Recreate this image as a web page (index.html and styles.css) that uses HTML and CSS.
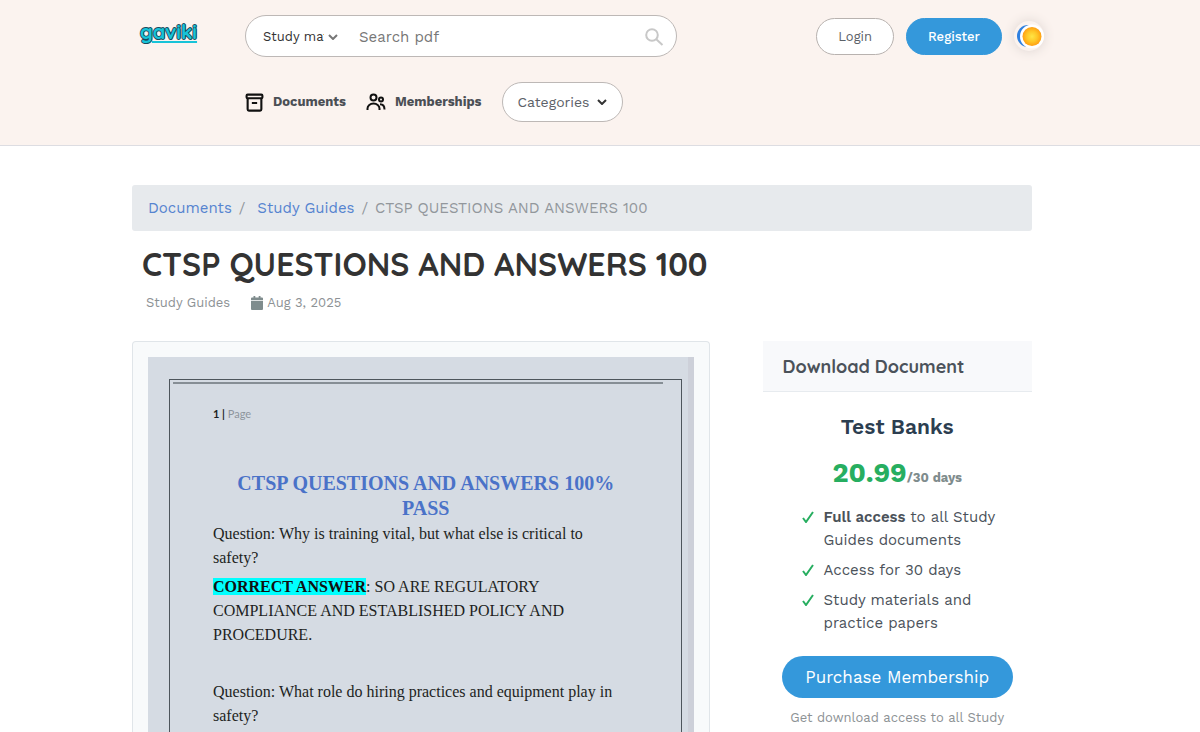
FILE: index.html
```html
<!DOCTYPE html>
<html lang="en">
<head>
<meta charset="utf-8">
<meta name="viewport" content="width=device-width, initial-scale=1">
<title>CTSP QUESTIONS AND ANSWERS 100</title>
<link rel="stylesheet" href="styles.css">
</head>
<body>
<header class="header">
  <a class="logo" href="#">gaviki</a>
  <form class="search" role="search">
    <div class="picker">
      <select class="picker-select" aria-label="Category"><option>Study materials</option></select>
      <svg class="picker-arrow" viewBox="0 0 10 6" aria-hidden="true"><path d="M1 1l4 4 4-4"/></svg>
    </div>
    <input class="search-input" type="text" placeholder="Search pdf" aria-label="Search pdf">
    <button class="search-button" type="submit" aria-label="Search">
      <svg viewBox="0 0 20 20" aria-hidden="true"><circle cx="8" cy="8" r="5.800"/><path d="M12 12l6.500 6"/></svg>
    </button>
  </form>
  <div class="account">
    <a class="pill" href="#">Login</a>
    <a class="pill pill-blue" href="#">Register</a>
    <button class="theme" type="button" aria-label="Toggle theme">
      <svg viewBox="0 0 30 30" aria-hidden="true">
        <defs><radialGradient id="sun"><stop offset="0" stop-color="#ffe545"/><stop offset=".55" stop-color="#ffc727"/><stop offset="1" stop-color="#ff9f12"/></radialGradient></defs>
        <circle cx="14" cy="15" r="11" fill="#2f80e0"/><circle cx="18" cy="15.500" r="12" fill="#fff"/><circle cx="18" cy="15.500" r="9.500" fill="url(#sun)"/>
      </svg>
    </button>
  </div>
  <nav class="nav">
    <a class="nav-link" href="#">
      <svg viewBox="0 0 18 18" aria-hidden="true"><rect x="1.500" y="1.500" width="15" height="3.500" rx="1"/><path d="M2.500 5v10.500a1.200 1.200 0 0 0 1.200 1.200h10.600a1.200 1.200 0 0 0 1.200-1.200V5M6.500 9.500h5"/></svg>
      Documents</a>
    <a class="nav-link" href="#">
      <svg class="people" viewBox="0 0 20 18" aria-hidden="true"><circle cx="7.500" cy="4.500" r="3"/><path d="M1.500 17v-1.500a6 5 0 0 1 12 0V17"/><circle cx="15" cy="6.500" r="2"/><path d="M14 11.200c3 0 4.500 1.800 4.500 5.300"/></svg>
      Memberships</a>
    <button class="categories" type="button">Categories
      <svg viewBox="0 0 10 6" aria-hidden="true"><path d="M1 1l4 4 4-4"/></svg>
    </button>
  </nav>
</header>
<main class="main">
  <nav class="crumbs" aria-label="Breadcrumb">
    <a href="#">Documents</a><span class="slash">/</span>
    <a href="#">Study Guides</a><span class="slash">/</span>
    <span>CTSP QUESTIONS AND ANSWERS 100</span>
  </nav>
  <h1 class="title">CTSP QUESTIONS AND ANSWERS 100</h1>
  <div class="meta">
    <span>Study Guides</span>
    <span class="date">
      <svg viewBox="0 0 12 14" aria-hidden="true"><path d="M2.500 0h1.800v1.500h3.400V0h1.800v1.500H11a1 1 0 0 1 1 1V4H0V2.500a1 1 0 0 1 1-1h1.500zM0 4.800h12V13a1 1 0 0 1-1 1H1a1 1 0 0 1-1-1z"/></svg>
      Aug 3, 2025</span>
  </div>
  <div class="columns">
    <section class="viewer">
      <div class="paper">
        <div class="frame">
          <div class="frame-rule"></div>
          <p class="page-no"><b>1 |</b> Page</p>
          <h2 class="doc-title">CTSP QUESTIONS AND ANSWERS 100% PASS</h2>
          <p class="question">Question: Why is training vital, but what else is critical to safety?</p>
          <p class="answer"><mark>CORRECT ANSWER</mark>: SO ARE REGULATORY COMPLIANCE AND ESTABLISHED POLICY AND PROCEDURE.</p>
          <p class="question">Question: What role do hiring practices and equipment play in safety?</p>
        </div>
      </div>
    </section>
    <aside class="offer">
      <h2 class="offer-head">Download Document</h2>
      <div class="offer-body">
        <h3 class="plan">Test Banks</h3>
        <p class="price">20.99<span>/30 days</span></p>
        <ul class="perks">
          <li><svg viewBox="0 0 12 12" aria-hidden="true"><path d="M1 7l3 4L11 1"/></svg><span><b>Full access</b> to all Study Guides documents</span></li>
          <li><svg viewBox="0 0 12 12" aria-hidden="true"><path d="M1 7l3 4L11 1"/></svg><span>Access for 30 days</span></li>
          <li><svg viewBox="0 0 12 12" aria-hidden="true"><path d="M1 7l3 4L11 1"/></svg><span>Study materials and practice papers</span></li>
        </ul>
        <button class="purchase" type="button">Purchase Membership</button>
        <p class="note">Get download access to all Study</p>
      </div>
    </aside>
  </div>
</main>
</body>
</html>
```
FILE: styles.css
```css
* { box-sizing: border-box; }
body { margin: 0; background: #fff; color: #4b525a; font: 14px/22px "Work Sans", Inter, sans-serif; }
h1, h2, h3, p, ul { margin: 0; padding: 0; }
a { text-decoration: none; color: inherit; }
button, input, select { font: inherit; color: inherit; }
svg { display: block; flex: none; fill: none; stroke: currentColor; }

.header { display: grid; grid-template-columns: 105px minmax(0, 432px) 1fr; row-gap: 25px; align-items: center; padding: 15px 13% 23px calc(11% + 8px); background: #fbf3ef; border-bottom: 1px solid #dddde2; }
.logo { justify-self: start; padding-bottom: 8px; font: 700 20px/24px Quicksand, Lato, sans-serif; color: #17c3d8; -webkit-text-stroke: 2px #184a5c; paint-order: stroke fill; text-decoration: underline 2px #17c3d8; text-underline-offset: 2px; }
.search { display: flex; align-items: center; height: 42px; border: 1px solid #bdb8b6; border-radius: 21px; background: #fff; padding: 1px 12px 0 17px; }
.picker { display: flex; align-items: center; width: 76px; }
.picker-select { appearance: none; width: 63px; height: 30px; padding: 0; border: 0; background: none; font-size: 13px; color: #333; overflow: hidden; text-overflow: clip; }
.picker-select { width: 61px; }
.picker-arrow { width: 10px; height: 6px; margin-left: 4px; stroke: #777; stroke-width: 2; }
.search-input { flex: 1; min-width: 0; height: 30px; margin-left: 20px; padding: 0; border: 0; outline: 0; background: none; font-size: 15px; }
.search-input::placeholder { color: #777; opacity: 1; }
.search-button { padding: 0; border: 0; background: none; color: #c8c8c8; }
.search-button svg { width: 20px; height: 20px; stroke-width: 2; }
.account { display: flex; justify-content: flex-end; align-items: center; gap: 12px; }
.pill { padding: 7px 21px; border: 1px solid #b8b2af; border-radius: 19px; background: #fff; color: #5c6168; font-size: 13px; line-height: 21px; }
.pill-blue { border-color: #3498db; background: #3498db; color: #fff; font-weight: 500; }
.theme { padding: 0; border: 0; border-radius: 50%; background: none; box-shadow: 0 0 12px #ddd4d0; }
.theme svg { width: 30px; height: 30px; stroke: none; }
.nav { grid-column: 2 / -1; display: flex; align-items: center; height: 40px; gap: 20px; }
.nav-link { display: flex; align-items: center; gap: 9px; font-size: 13px; font-weight: 700; color: #4b4f55; }
.nav-link svg { width: 19px; height: 19px; stroke: #111; stroke-width: 2; }
.nav-link .people { width: 20px; height: 18px; }
.categories { display: flex; align-items: center; gap: 8px; height: 40px; padding: 0 15px; border: 1px solid #bdb8b6; border-radius: 20px; background: #fff; color: #5c6168; }
.categories svg { width: 10px; height: 6px; stroke: #333; stroke-width: 2; }

.main { padding: 39px 14% 0 11%; }
.crumbs { display: flex; align-items: center; gap: 7px; height: 46px; padding: 0 16px; border-radius: 3px; background: #e7eaed; color: #92979c; font-size: 15px; }
.crumbs a { color: #5684d0; }
.slash + a { margin-left: 5px; }
.title { margin: 13px 0 0 10px; font: 700 32px/40px Quicksand, Lato, sans-serif; color: #333; }
.meta { display: flex; gap: 21px; margin: 8px 0 0 14px; color: #8d9295; font-size: 13px; }
.date { display: flex; align-items: center; gap: 4px; }
.date svg { width: 12px; height: 14px; fill: #7f8c8d; stroke: none; }
.columns { display: grid; grid-template-columns: 15fr 7fr; column-gap: 53px; margin-top: 27px; }
.viewer { padding: 15px; border: 1px solid #e0e5e9; border-bottom: 0; border-radius: 4px 4px 0 0; background: #f8fafb; }
.paper { padding: 22px 6px 0 21px; border-right: 6px solid #cdd0d9; background: #d5dbe3; font-family: "Liberation Serif", serif; font-size: 16px; line-height: 24px; color: #1d1f22; }
.frame { padding: 2px 58px 40px 43px; border: solid #4d555c; border-width: 1px 1px 0; }
.frame-rule { height: 2px; margin: 0 -40px; background: #868e95; }
.page-no { margin-top: 22px; font: 11px/16px Lato, sans-serif; color: #8d959d; }
.page-no b { color: #1d1f22; }
.doc-title { margin-top: 49px; padding-left: 16px; font-size: 20px; line-height: 25px; text-align: center; color: #4a72c8; }
.question { margin-top: 1px; }
.answer { margin: 5px 0 33px; }
.answer mark { background: #00ffff; color: #111; font-weight: 700; }
.offer-head { padding: 15px 20px 13px; border-bottom: 1px solid #e7ebef; background: #f8f9fb; font: 700 18px/22px Quicksand, Lato, sans-serif; color: #4b525a; }
.offer-body { padding: 22px 19px; }
.plan { font-size: 21px; line-height: 26px; font-weight: 600; text-align: center; color: #2c3e50; }
.price { margin-top: 15px; font-size: 27px; line-height: 36px; font-weight: 700; text-align: center; color: #27ae60; }
.price span { font-size: 13px; color: #7f8c8d; }
.perks { display: grid; gap: 7px; margin-top: 10px; padding-left: 20px; list-style: none; font-size: 15px; line-height: 23px; }
.perks li { display: flex; gap: 10px; }
.perks b { font-weight: 600; }
.perks svg { width: 12px; height: 12px; margin-top: 5px; stroke: #27ae60; stroke-width: 2; }
.purchase { width: 100%; height: 42px; margin-top: 21px; padding: 0; border: 0; border-radius: 21px; background: #3498db; color: #fff; font-size: 17px; }
.note { margin-top: 9px; font-size: 13px; text-align: center; color: #8d9295; }
```
